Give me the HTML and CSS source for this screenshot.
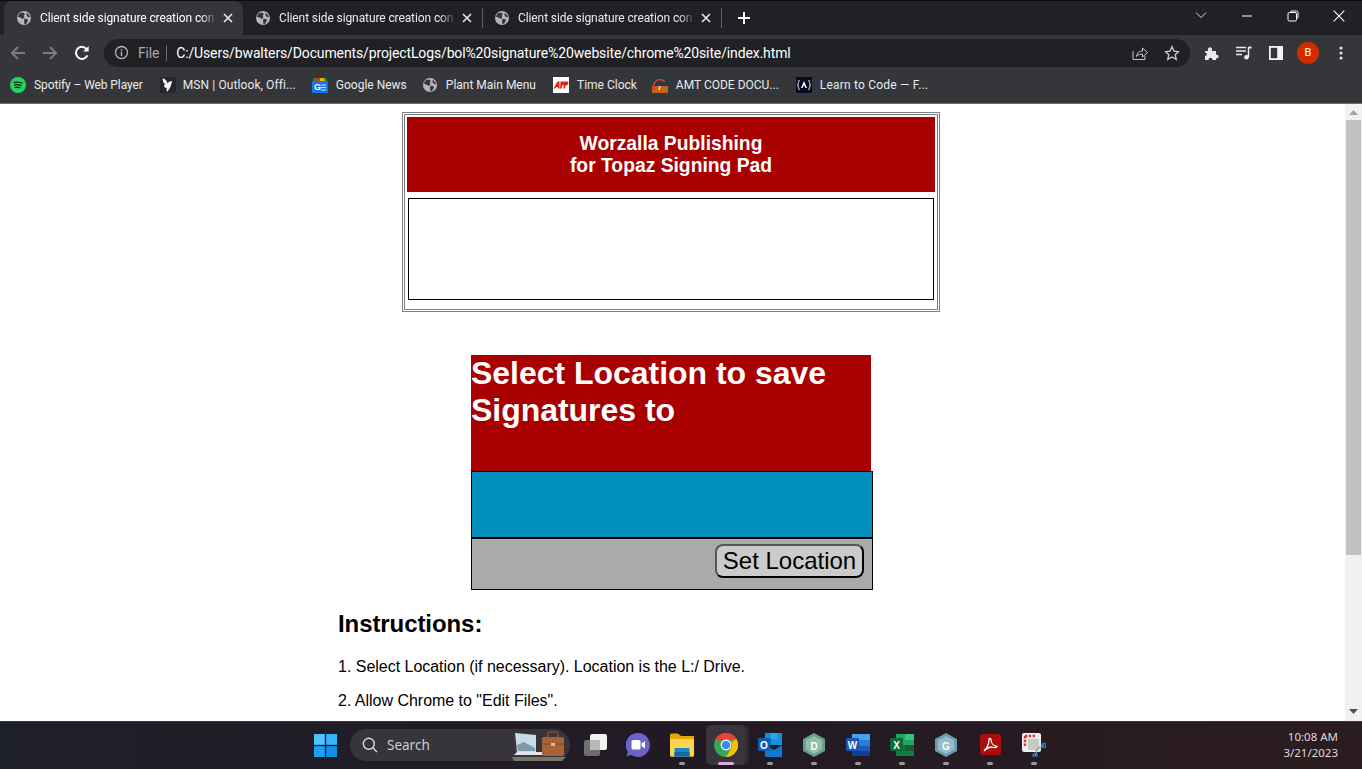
FILE: index.html
```html
<!DOCTYPE html>
<html lang="en">
<head>
<meta charset="utf-8">
<title>Client side signature creation</title>
<link rel="stylesheet" href="styles.css">
</head>
<body>
<svg class="defs" width="0" height="0" aria-hidden="true">
  <defs>
    <symbol id="globe" viewBox="0 0 16 16">
      <circle cx="8" cy="8" r="8" fill="#b4b6ba"/>
      <path d="M3 2.600 7 1.800 9 3.400 7.600 5.600 8.600 7 6.600 9.200 5 8 1.800 6.600.8 6.500Z M8.600 8.800 11.800 9 12.400 11 10.400 14.600 8.600 15 8 11.400Z M11 2 14 4.800 15 7 12.400 6.800 10.800 4.600Z" fill="#35363a"/>
    </symbol>
    <symbol id="x" viewBox="0 0 10 10">
      <path d="M1 1 9 9M9 1 1 9" stroke="currentColor" stroke-width="1.600" fill="none"/>
    </symbol>
  </defs>
</svg>

<header class="chrome">
  <div class="tabstrip">
    <div class="tab tab-active">
      <svg class="fav"><use href="#globe"/></svg><span class="tab-title">Client side signature creation con</span><svg class="tab-x"><use href="#x"/></svg>
    </div>
    <div class="tab">
      <svg class="fav"><use href="#globe"/></svg><span class="tab-title">Client side signature creation con</span><svg class="tab-x"><use href="#x"/></svg>
    </div>
    <i class="tab-sep"></i>
    <div class="tab">
      <svg class="fav"><use href="#globe"/></svg><span class="tab-title">Client side signature creation con</span><svg class="tab-x"><use href="#x"/></svg>
    </div>
    <i class="tab-sep"></i>
    <svg class="newtab" viewBox="0 0 12 12"><path d="M6 0V12M0 6H12" stroke="#fff" stroke-width="2"/></svg>
    <div class="winctl">
      <svg viewBox="0 0 12 8" class="wc wc-chev"><path d="M1 1.500 6 6.500 11 1.500" stroke="#d8d8d8" fill="none"/></svg>
      <svg viewBox="0 0 12 12" class="wc wc-min"><path d="M1 6H11" stroke="#fff"/></svg>
      <svg viewBox="0 0 12 12" class="wc wc-max"><path d="M3.500 2.500V2.200Q3.500 1 4.700 1H9.500Q11 1 11 2.500V7.300Q11 8.500 9.800 8.500H9.500" stroke="#fff" fill="none"/><rect x="1" y="2.500" width="8.500" height="8.500" rx="1.400" stroke="#fff" fill="none"/></svg>
      <svg viewBox="0 0 12 12" class="wc wc-close"><path d="M.7.7 11.300 11.300M11.300.7.700 11.300" stroke="#fff" stroke-width="1.100"/></svg>
    </div>
  </div>

  <div class="toolbar">
    <svg class="nav nav-back" viewBox="0 0 16 16"><path d="M15 8H2M8 2 2 8l6 6" stroke="#7b7d80" stroke-width="2" fill="none"/></svg>
    <svg class="nav nav-fwd" viewBox="0 0 16 16"><path d="M1 8H14M8 2l6 6-6 6" stroke="#7b7d80" stroke-width="2" fill="none"/></svg>
    <svg class="nav nav-reload" viewBox="0 0 16 16"><path d="M13.400 10.400A6 6 0 1 1 13 4.600" stroke="#fff" stroke-width="2" fill="none"/><path d="M14.600 1v5.400H9.200Z" fill="#fff"/></svg>
    <div class="omni">
      <svg class="info" viewBox="0 0 16 16"><circle cx="8" cy="8" r="6.400" stroke="#b4b6ba" stroke-width="1.400" fill="none"/><path d="M8 7v4.600M8 4.200v1.600" stroke="#b4b6ba" stroke-width="1.500"/></svg>
      <span class="scheme">File</span>
      <i class="omni-sep"></i>
      <span class="url">C:/Users/bwalters/Documents/projectLogs/bol%20signature%20website/chrome%20site/index.html</span>
      <svg class="omni-ic share" viewBox="0 0 16 16"><path d="M1 6V14.500H13V11" stroke="#c4c6c9" fill="none"/><path d="M4.500 11.500C5 7.500 7.500 6 10.500 6V3l5 4.500-5 4.500V9C8 9 6 9.500 4.500 11.500Z" stroke="#c4c6c9" fill="none"/></svg>
      <svg class="omni-ic star" viewBox="0 0 16 16"><path d="M8 1.800 10 6.200l4.600.5-3.400 3.100 1 4.600L8 12l-4.200 2.400 1-4.600L1.400 6.700 6 6.200Z" stroke="#c8c9cb" stroke-width="1.400" fill="none"/></svg>
    </div>
    <div class="tools">
      <svg class="tool tool-ext" viewBox="0 0 16 16"><path d="M1 6H4V4.500C4 1.500 8 1.500 8 4.500V6H12V9.500C15.500 9.500 15.500 13.500 12 13.500V15H8.500C8.500 12 4.500 12 4.500 15H1V11C3.500 11 3.500 7.500 1 7.500Z" fill="#e8eaed"/></svg>
      <svg class="tool tool-media" viewBox="0 0 16 16"><path d="M0 2.500H10M0 6H10M0 9.500H6" stroke="#e8eaed" stroke-width="1.400"/><path d="M12.500 2V12" stroke="#e8eaed" stroke-width="1.500"/><path d="M12.500 1.500H15.500V3.500H12.500Z" fill="#e8eaed"/><circle cx="10.500" cy="12.200" r="2.300" fill="#e8eaed"/></svg>
      <svg class="tool tool-side" viewBox="0 0 14 14"><rect width="14" height="14" fill="#f1f3f4"/><rect x="1.800" y="1.800" width="6.400" height="10.400" fill="#35363a"/></svg>
      <span class="avatar">B</span>
      <svg class="tool tool-menu" viewBox="0 0 4 14"><circle cx="2" cy="2" r="1.500" fill="#e8eaed"/><circle cx="2" cy="7" r="1.500" fill="#e8eaed"/><circle cx="2" cy="12" r="1.500" fill="#e8eaed"/></svg>
    </div>
  </div>

  <nav class="bookmarks">
    <a class="bm bm-spotify"><svg viewBox="0 0 16 16"><circle cx="8" cy="8" r="8" fill="#1ed760"/><path d="M3.500 5.500C6.500 4.700 9.500 4.900 12.500 6.200M4 8C6.500 7.400 9 7.600 11.500 8.700M4.500 10.400C6.500 10 8.500 10.100 10.500 11" stroke="#222" stroke-width="1.300" fill="none"/></svg><span>Spotify – Web Player</span></a>
    <a class="bm bm-msn"><svg viewBox="0 0 16 16"><rect width="16" height="16" fill="#26272a"/><path d="M2.500 1.500C5 1.500 7 3.500 7.500 6.500 8 5 10 4 12 4 11.500 8 10 12 7 15 6.500 13.500 6.500 12 6.700 11 5 11 4 10 4 8 4.500 8 5 7.800 5.500 7.500 3.500 6.500 2.500 4 2.500 1.500Z" fill="#f2f2f2"/></svg><span>MSN | Outlook, Offi...</span></a>
    <a class="bm bm-gnews"><svg viewBox="0 0 16 16"><path d="M1 3Q1 1 3 1H13Q15 1 15 3V5H1Z" fill="#1e8e3e"/><path d="M8 1H12L13 5H8Z" fill="#f9ab00"/><path d="M4 1H8V5H4Z" fill="#d93025" opacity=".8"/><rect y="4" width="16" height="12" rx="1" fill="#1a73e8"/><text class="gn-t" x="2" y="13">G</text><path d="M9 8H14M9 10.500H14M9 13H14" stroke="#d2e3fc" stroke-width="1.200"/></svg><span>Google News</span></a>
    <a class="bm bm-plant"><svg class="bm-globe"><use href="#globe"/></svg><span>Plant Main Menu</span></a>
    <a class="bm bm-adp"><svg viewBox="0 0 16 16"><rect width="16" height="16" fill="#fff"/><path d="M.5 11.500 4.500 4.500H6.500L6.500 11.500H5V10H3.200L2.300 11.500ZM7.500 4.500H10.500C12 4.500 12 8 10 8.500H9L8.500 11.500H7ZM11 4.500H14.500C16 4.500 15.500 8 13.500 8.500H12.500L12 11.500H10.500Z" fill="#e2231a"/></svg><span>Time Clock</span></a>
    <a class="bm bm-amt"><svg viewBox="0 0 16 16"><rect width="16" height="16" rx="1" fill="#1c3c4c"/><path d="M0 9H16V15Q16 16 15 16H1Q0 16 0 15Z" fill="#c8611a"/><path d="M3 13A6 6 0 1 1 13 5" stroke="#d33" stroke-width="1.600" fill="none"/><path d="M8 9 7 13" stroke="#eee" stroke-width="1.200"/></svg><span>AMT CODE DOCU...</span></a>
    <a class="bm bm-fcc"><svg viewBox="0 0 16 16"><rect width="16" height="16" fill="#0a0a23"/><path d="M3.500 3C1.500 6 1.500 10 3.500 13M12.500 3C14.500 6 14.500 10 12.500 13" stroke="#fff" fill="none"/><path d="M8 4 11 11H9.500L8 8 6.500 11H5Z" fill="#fff"/></svg><span>Learn to Code — F...</span></a>
  </nav>
</header>

<div class="viewport">
  <main class="page">
    <div class="wrap">
      <div class="sigbox">
        <div class="sig-title">Worzalla Publishing<br>for Topaz Signing Pad</div>
        <div class="sig-canvas"></div>
      </div>
      <section class="location">
        <h1 class="loc-head">Select Location to save Signatures to</h1>
        <div class="loc-blue"></div>
        <div class="loc-foot"><button class="loc-btn" type="button">Set Location</button></div>
      </section>
      <section class="instr">
        <h2>Instructions:</h2>
        <p>1. Select Location (if necessary). Location is the L:/ Drive.</p>
        <p>2. Allow Chrome to "Edit Files".</p>
      </section>
    </div>
  </main>
  <div class="scrollbar">
    <svg class="sb-arrow" viewBox="0 0 9 5"><path d="M0 5 4.500 0 9 5Z" fill="#a3a3a3"/></svg>
    <div class="sb-thumb"></div>
    <svg class="sb-arrow" viewBox="0 0 9 5"><path d="M0 0 4.500 5 9 0Z" fill="#505050"/></svg>
  </div>
</div>

<footer class="taskbar">
  <div class="tb-center">
    <svg class="tb-ic tb-start" viewBox="0 0 24 24"><rect width="11.300" height="11.300" fill="#4cc2ff"/><rect x="12.700" width="11.300" height="11.300" fill="#34b5fb"/><rect y="12.700" width="11.300" height="11.300" fill="#19a3f5"/><rect x="12.700" y="12.700" width="11.300" height="11.300" fill="#0f8fee"/></svg>
    <div class="tb-search">
      <svg class="tb-glass" viewBox="0 0 16 16"><circle cx="6.800" cy="6.800" r="5.500" stroke="#d8d8d8" stroke-width="1.400" fill="none"/><path d="M10.800 10.800 15 15" stroke="#d8d8d8" stroke-width="1.400"/></svg>
      <span class="tb-search-t">Search</span>
      <svg class="tb-art" viewBox="0 0 58 30"><path d="M0 26H54L50 30H2Z" fill="#78766a"/><path d="M3 2 24 4V21L5 21Z" fill="#c8dce8"/><path d="M5 14 12 11 23 17V20H6Z" fill="#7e9aa8"/><path d="M5 21H32L34 24H2Z" fill="#dfe4e8"/><rect x="30" y="6" width="22" height="19" rx="2" fill="#a8623a"/><path d="M36 6V3Q36 1 38 1H44Q46 1 46 3V6" stroke="#8a4a2a" stroke-width="1.500" fill="none"/><path d="M30 13H52" stroke="#7c4426"/><rect x="39" y="12" width="4" height="3" fill="#e8c070"/></svg>
    </div>
    <svg class="tb-ic tb-tv" viewBox="0 0 24 24"><rect x="1" y="7" width="16" height="16" rx="2" fill="#6f6f6f"/><rect x="7" y="1" width="17" height="16" rx="2" fill="#f2f2f2"/><rect x="7" y="7" width="10" height="10" fill="#b9b9b9"/></svg>
    <svg class="tb-ic tb-teams" viewBox="0 0 24 24"><path d="M12 0A12 12 0 1 1 5 21.800L.500 23.500 2 19A12 12 0 0 1 12 0Z" fill="#6a63c9"/><rect x="5.500" y="7" width="9" height="9.500" rx="1.500" fill="#fff"/><path d="M15.500 10.500 19 8V15.500L15.500 13Z" fill="#fff"/></svg>
    <div class="tb-slot"><svg class="tb-ic tb-files" viewBox="0 0 24 24"><path d="M0 2Q0 .5 1.500 .5H8L11 3H24V22Q24 23.500 22.500 23.500H1.500Q0 23.500 0 22Z" fill="#e8a800"/><path d="M0 6H24V22Q24 23.500 22.500 23.500H1.500Q0 23.500 0 22Z" fill="#fdd44f"/><rect x="4.500" y="15" width="15" height="8.500" rx="1" fill="#1a88c8"/><rect x="4.500" y="19" width="15" height="4.500" fill="#0f68a8"/></svg><i class="tb-dot"></i></div>
    <div class="tb-slot tb-active"><svg class="tb-ic tb-chrome" viewBox="0 0 24 24"><circle cx="12" cy="12" r="12" fill="#34a853"/><path d="M12 0A12 12 0 0 1 22.400 6H12A6 6 0 0 0 6.800 9L1.600 6A12 12 0 0 1 12 0Z" fill="#ea4335"/><path d="M22.400 6A12 12 0 0 1 12 24L17.200 15A6 6 0 0 0 17.200 9Z" fill="#fbbc04"/><circle cx="12" cy="12" r="5.400" fill="#fff"/><circle cx="12" cy="12" r="4.300" fill="#4285f4"/></svg><i class="tb-dot tb-dot-active"></i></div>
    <div class="tb-slot"><svg class="tb-ic tb-outlook" viewBox="0 0 24 24"><rect x="7" y="0" width="17" height="12" fill="#1490df"/><rect x="13" y="0" width="6" height="6" fill="#28a8ea"/><rect x="7" y="6" width="6" height="6" fill="#0a6cb8"/><path d="M7 12 16 17 24 12V24H7Z" fill="#0f78d4"/><rect y="5" width="12" height="13" rx="1" fill="#0f5fb0"/><text class="ltr" x="6" y="15.500">O</text></svg><i class="tb-dot"></i></div>
    <div class="tb-slot"><svg class="tb-ic tb-hex" viewBox="0 0 24 24"><path d="M12 0 23 6V18L12 24 1 18V6Z" fill="#69a08c"/><path d="M12 3 20 7.500V16.500L12 21 4 16.500V7.500Z" fill="#8ec1ad"/><text class="ltr" x="12" y="16.500">D</text></svg><i class="tb-dot"></i></div>
    <div class="tb-slot"><svg class="tb-ic tb-word" viewBox="0 0 24 24"><rect x="6" y="1" width="18" height="22" rx="1" fill="#2b7cd3"/><rect x="6" y="1" width="18" height="6" fill="#41a5ee"/><rect x="6" y="13" width="18" height="5" fill="#185abd"/><rect x="6" y="18" width="18" height="5" fill="#103f91"/><rect y="5" width="13" height="13" rx="1" fill="#1a56b0"/><text class="ltr" x="6.500" y="15.500">W</text></svg><i class="tb-dot"></i></div>
    <div class="tb-slot"><svg class="tb-ic tb-excel" viewBox="0 0 24 24"><rect x="6" y="1" width="18" height="22" rx="1" fill="#21a366"/><rect x="15" y="1" width="9" height="6" fill="#33c481"/><rect x="6" y="12" width="18" height="11" fill="#107c41"/><rect x="15" y="12" width="9" height="6" fill="#185c37"/><rect y="5" width="13" height="13" rx="1" fill="#0e6b38"/><text class="ltr" x="6.500" y="15.500">X</text></svg><i class="tb-dot"></i></div>
    <div class="tb-slot"><svg class="tb-ic tb-hex" viewBox="0 0 24 24"><path d="M12 0 23 6V18L12 24 1 18V6Z" fill="#6e9cb0"/><path d="M12 3 20 7.500V16.500L12 21 4 16.500V7.500Z" fill="#94bccc"/><text class="ltr" x="12" y="16.500">G</text></svg><i class="tb-dot"></i></div>
    <div class="tb-slot"><svg class="tb-ic tb-pdf" viewBox="0 0 24 24"><rect x="2" y="1" width="21" height="21" rx="3" fill="#ac0c0c"/><path d="M6 18C9 15 11 10 11 6.500 11 5 13 5 13 6.500 13 10 15.500 13 19 13.500 19 15 16 15 14 14 11.500 14 9 15 6 18Z" stroke="#fff" stroke-width="1.300" fill="none"/></svg><i class="tb-dot"></i></div>
    <div class="tb-slot"><svg class="tb-ic tb-snip" viewBox="0 0 24 24"><rect width="19" height="19" rx="2" fill="#eee"/><path d="M3 3H13M3 3V13" stroke="#d13a2a" stroke-width="2.400" stroke-dasharray="2.400 1.400"/><rect x="6" y="6" width="11" height="11" fill="#c8c8c8"/><path d="M13 18 22 12M17 13 13 23" stroke="#9aa" stroke-width="1.200"/><circle cx="22" cy="12.500" r="2" fill="none" stroke="#1a86d8" stroke-width="1.400"/><circle cx="13" cy="22.500" r="2" fill="none" stroke="#1a86d8" stroke-width="1.400"/></svg><i class="tb-dot"></i></div>
  </div>
  <div class="tb-clock"><span>10:08 AM</span><span>3/21/2023</span></div>
</footer>
</body>
</html>
```

FILE: styles.css
```css
* { box-sizing: border-box; }
html, body { margin: 0; height: 100%; overflow: hidden; }
body {
  width: 1362px;
  height: 769px;
  display: flex;
  flex-direction: column;
  font-family: "Liberation Sans", Arial, sans-serif;
  background: #fff;
  color: #000;
}
.defs { position: absolute; }

/* Browser chrome */
.chrome { flex: none; height: 104px; background: #35363a; border-bottom: 1px solid #6b6c6f; font-family: Roboto, "Noto Sans", sans-serif; }
.tabstrip { height: 35px; display: flex; align-items: center; background: #202124; border-top: 1px solid #0c0c0d; color: #e8eaed; font-size: 12px; }
.tab { width: 239px; height: 34px; padding: 0 10px 0 13px; display: flex; align-items: center; flex: none; }
.tab:nth-child(1) { margin-left: 4px; }
.tab-active { background: #35363a; border-radius: 8px 8px 0 0; color: #fff; }
.tab-title { flex: 1; min-width: 0; margin-left: 9px; font-size: 12px; letter-spacing: -.1px; white-space: nowrap; -webkit-mask-image: linear-gradient(90deg, #000 90%, transparent 99%); mask-image: linear-gradient(90deg, #000 90%, transparent 99%); }
.fav { width: 14px; height: 14px; flex: none; }
.tab-x { width: 10px; height: 10px; margin-left: 4px; flex: none; color: #e8eaed; }
.tab-sep { width: 1px; height: 20px; margin-right: -1px; background: #5f6063; flex: none; }
.newtab { width: 12px; height: 12px; margin-left: 17px; flex: none; }
.winctl { margin-left: auto; width: 167px; height: 34px; position: relative; flex: none; }
.wc { position: absolute; }
.wc-chev { left: 0; top: 10px; width: 12px; height: 8px; }
.wc-min { left: 46px; top: 9px; width: 12px; height: 12px; }
.wc-max { left: 92px; top: 9px; width: 12px; height: 12px; }
.wc-close { left: 138px; top: 9px; width: 12px; height: 12px; }

.toolbar { height: 35px; display: flex; align-items: center; padding-left: 10px; }
.nav { width: 16px; height: 16px; flex: none; }
.nav-fwd { margin-left: 16px; }
.nav-reload { margin-left: 16px; }
.omni { width: 1086px; height: 28px; margin-left: 14px; padding: 0 10px; background: #202124; border-radius: 14px; display: flex; align-items: center; color: #fff; font-size: 14px; flex: none; }
.info { width: 15px; height: 15px; flex: none; }
.scheme { margin-left: 9px; color: #a8aaad; font-size: 14px; letter-spacing: -.2px; }
.omni-sep { width: 1px; height: 16px; margin: 0 9px 0 7px; background: #6b6c6f; }
.url { letter-spacing: -.13px; white-space: nowrap; flex: 1; }
.omni-ic { width: 16px; height: 16px; flex: none; }
.share { margin-right: 16px; }
.tools { display: flex; align-items: center; margin-left: 14px; }
.tool { flex: none; }
.tool-ext { width: 16px; height: 16px; }
.tool-media { width: 16px; height: 16px; margin-left: 16px; }
.tool-side { width: 14px; height: 14px; margin-left: 17px; }
.avatar { width: 22px; height: 22px; margin-left: 14px; border-radius: 50%; background: #d32a00; color: #fff; font-size: 11px; display: flex; align-items: center; justify-content: center; }
.tool-menu { width: 4px; height: 14px; margin-left: 20px; }

.bookmarks { height: 33px; padding: 0 0 4px 10px; display: flex; align-items: center; font-size: 12px; color: #e8eaed; }
.bm { display: flex; align-items: center; flex: none; white-space: nowrap; }
.bm svg { width: 16px; height: 16px; flex: none; margin-right: 8px; }
.bm svg.bm-globe { width: 14px; height: 14px; margin-right: 9px; }
.bm-spotify { letter-spacing: -.1px; }
.bm-msn { margin-left: 17px; letter-spacing: .1px; }
.bm-msn svg { margin-right: 7px; }
.bm-gnews { margin-left: 16px; }
.bm-plant { margin-left: 16px; }
.bm-adp { margin-left: 17px; }
.bm-amt { margin-left: 15px; }
.bm-fcc { margin-left: 17px; letter-spacing: .2px; }
.gn-t { font: 700 9px "Liberation Sans", sans-serif; fill: #fff; }

/* Page */
.viewport { flex: none; height: 617px; display: flex; overflow: hidden; }
.page { flex: 1; padding: 8px 3px 0 0; overflow: hidden; }
.wrap { width: 666px; margin: 0 auto; display: flex; flex-direction: column; }
.sigbox { width: 538px; height: 200px; margin: 0 auto; padding: 2px; border: 3px double #808080; }
.sig-title { height: 75px; background: #a80000; color: #fff; font-weight: 700; font-size: 19.3px; line-height: 22px; text-align: center; padding-top: 16px; }
.sig-canvas { width: 526px; height: 102px; margin: 6px 1px 0; border: 1px solid #000; background: #fff; }
.location { width: 402px; margin: 43px 131px 0 133px; }
.loc-head { width: 400px; height: 116px; margin: 0; background: #a80000; color: #fff; font-size: 32px; line-height: 37px; font-weight: 700; letter-spacing: -.03px; }
.loc-blue { height: 67px; background: #008fbb; border: 1px solid #000; }
.loc-foot { height: 52px; padding: 5px 8px 0 0; background: #aaa; border: 1px solid #000; display: flex; justify-content: flex-end; align-items: flex-start; }
.loc-btn { width: 149px; height: 34px; padding: 0; font: 24px "Liberation Sans", Arial, sans-serif; color: #000; background: #cbcbcb; border: 2px solid #000; border-top-color: #555; border-left-color: #555; border-radius: 8px; }
.instr h2 { margin: 20px 0 0; font-size: 24px; line-height: 28px; font-weight: 700; letter-spacing: -.08px; }
.instr p { margin: 16px 0 0; font-size: 16px; line-height: 18px; letter-spacing: -.02px; }
.instr h2 + p { margin-top: 20px; }

.scrollbar { flex: none; width: 17px; background: #f1f1f1; display: flex; flex-direction: column; align-items: center; }
.sb-arrow { flex: none; width: 9px; height: 5px; margin: 6px 0; }
.sb-thumb { flex: none; width: 15px; height: 435px; background: #c1c1c1; margin-bottom: 148px; margin-top: -1px; }

/* Taskbar */
.taskbar { flex: none; height: 48px; position: relative; background: linear-gradient(90deg, #1e2029 0%, #211a24 50%, #2c1c20 100%); border-top: 1px solid #3a383c; color: #e8e8e8; }
.tb-center { display: flex; align-items: center; height: 46px; padding-left: 314px; }
.tb-ic { width: 24px; height: 24px; flex: none; }
.tb-start { width: 23px; height: 23px; }
.tb-search { width: 220px; height: 32px; margin-left: 13px; border-radius: 16px; background: #38343c; display: flex; align-items: center; padding-left: 12px; position: relative; flex: none; }
.tb-glass { width: 16px; height: 16px; flex: none; }
.tb-search-t { margin-left: 9px; font: 13.5px "Noto Sans", "Open Sans", sans-serif; color: #cfcfcf; }
.tb-art { position: absolute; left: 162px; top: 2px; width: 58px; height: 30px; }
.tb-tv { margin-left: 13px; }
.tb-teams { margin-left: 19px; }
.tb-slot { width: 40px; height: 40px; margin-left: 4px; flex: none; display: flex; align-items: center; justify-content: center; position: relative; border-radius: 5px; }
.tb-teams + .tb-slot { margin-left: 12px; }
.tb-active { background: #3a343c; box-shadow: 4px 0 0 -1px #2e2830; }
.tb-dot { position: absolute; left: 17px; bottom: 0; width: 6px; height: 3px; border-radius: 2px; background: #9a9a9a; }
.tb-dot-active { left: 12px; width: 16px; background: #dfa7e0; }
.ltr { font: 700 10px "Liberation Sans", sans-serif; fill: #fff; text-anchor: middle; }
.tb-clock { position: absolute; right: 24px; top: 7px; display: flex; flex-direction: column; align-items: flex-end; font: 11.5px/16px "Noto Sans", "Open Sans", sans-serif; color: #dcdcdc; }
```
